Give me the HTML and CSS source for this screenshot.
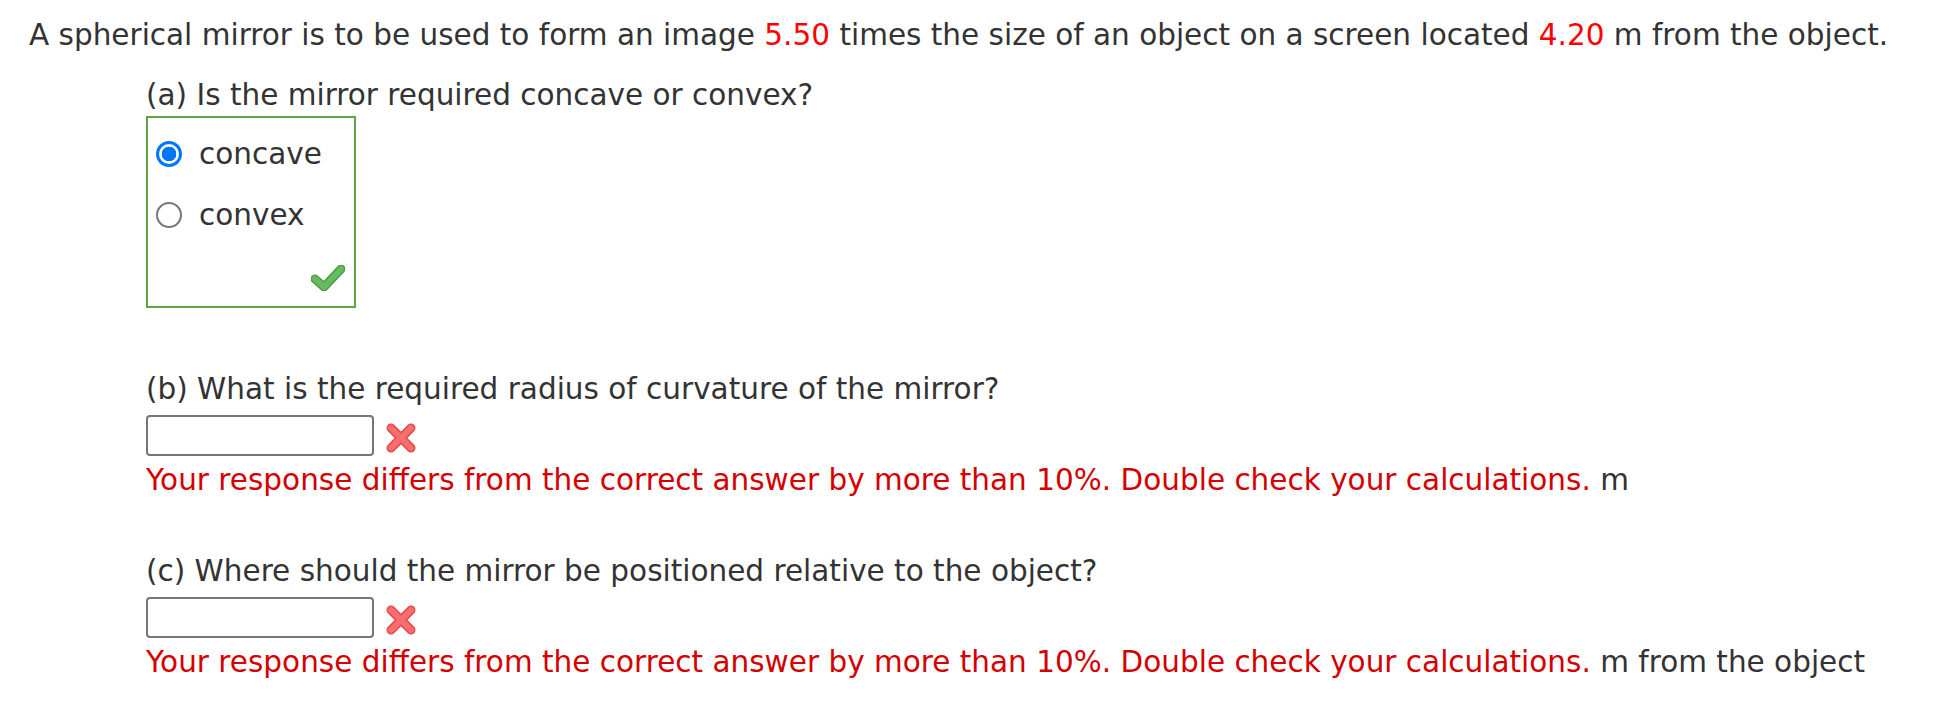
FILE: index.html
```html
<!DOCTYPE html>
<html lang="en">
<head>
<meta charset="utf-8">
<title>Spherical mirror</title>
<link rel="stylesheet" href="styles.css">
</head>
<body>
<div class="question">
  <p class="stem">A spherical mirror is to be used to form an image <span class="num">5.50</span> times the size of an object on a screen located <span class="num">4.20</span> m from the object.</p>
  <div class="parts">
    <div class="part part-a">
      <p class="prompt">(a) Is the mirror required concave or convex?</p>
      <div class="choices">
        <label class="choice"><input class="radio" type="radio" name="a" checked><span class="choice-text">concave</span></label>
        <label class="choice"><input class="radio" type="radio" name="a"><span class="choice-text">convex</span></label>
        <div class="mark-row">
          <svg class="check" width="34" height="26" viewBox="0 0 34 26">
            <path d="M4 14 L13 22 L30 4" fill="none" stroke="#4c9a44" stroke-width="9" stroke-linecap="round" stroke-linejoin="round"/>
            <path d="M4 14 L13 22 L30 4" fill="none" stroke="#66bb5e" stroke-width="6" stroke-linecap="round" stroke-linejoin="round"/>
          </svg>
        </div>
      </div>
    </div>
    <div class="part part-b">
      <p class="prompt">(b) What is the required radius of curvature of the mirror?</p>
      <div class="answer-row">
        <input class="answer" type="text">
        <svg class="cross" width="30" height="30" viewBox="0 0 30 30">
          <path d="M5 5 L25 25 M25 5 L5 25" fill="none" stroke="#e54b4b" stroke-width="9" stroke-linecap="round"/>
          <path d="M5 5 L25 25 M25 5 L5 25" fill="none" stroke="#f76e6e" stroke-width="6" stroke-linecap="round"/>
        </svg>
      </div>
      <p class="feedback"><span class="err">Your response differs from the correct answer by more than 10%. Double check your calculations.</span> m</p>
    </div>
    <div class="part part-c">
      <p class="prompt">(c) Where should the mirror be positioned relative to the object?</p>
      <div class="answer-row">
        <input class="answer" type="text">
        <svg class="cross" width="30" height="30" viewBox="0 0 30 30">
          <path d="M5 5 L25 25 M25 5 L5 25" fill="none" stroke="#e54b4b" stroke-width="9" stroke-linecap="round"/>
          <path d="M5 5 L25 25 M25 5 L5 25" fill="none" stroke="#f76e6e" stroke-width="6" stroke-linecap="round"/>
        </svg>
      </div>
      <p class="feedback"><span class="err">Your response differs from the correct answer by more than 10%. Double check your calculations.</span> m from the object</p>
    </div>
  </div>
</div>
</body>
</html>
```
FILE: styles.css
```css
html, body {
  margin: 0;
  padding: 0;
  background: #ffffff;
}

body {
  font-family: "DejaVu Sans", sans-serif;
  font-size: 29.5px;
  line-height: 36px;
  color: #333333;
}

p {
  margin: 0;
}

.question {
  padding: 17px 0 0 29px;
}

.num {
  color: #ff0000;
}

.parts {
  padding-left: 117px;
  display: flex;
  flex-direction: column;
}

.part-a .prompt {
  margin-top: 24px;
}

.choices {
  margin-top: 3px;
  width: 210px;
  box-sizing: border-box;
  border: 2px solid #62a242;
  padding: 18px 9px 15px 8px;
  display: flex;
  flex-direction: column;
  gap: 25px;
}

.choice {
  display: flex;
  align-items: center;
  height: 36px;
  gap: 17px;
}

.radio {
  appearance: none;
  -webkit-appearance: none;
  margin: 0;
  width: 26px;
  height: 26px;
  box-sizing: border-box;
  border: 2px solid #767676;
  border-radius: 50%;
  background: #ffffff;
  flex: none;
}

.radio:checked {
  border: 3px solid #0075ff;
  background: radial-gradient(circle, #0075ff 0 7px, #ffffff 7.6px);
}

.mark-row {
  display: flex;
  justify-content: flex-end;
  margin-top: 7px;
}

.check {
  display: block;
}

.part-b .prompt {
  margin-top: 63px;
}

.part-c .prompt {
  margin-top: 55px;
}

.answer-row {
  display: flex;
  align-items: center;
  gap: 12px;
  margin-top: 8px;
}

.answer {
  width: 228px;
  height: 41px;
  box-sizing: border-box;
  border: 2px solid #767676;
  border-radius: 4px;
  margin: 0;
  padding: 0 6px;
  font: inherit;
}

.cross {
  display: block;
  margin-top: 5px;
}

.feedback {
  margin-top: 6px;
}

.err {
  color: #d40000;
}
```
